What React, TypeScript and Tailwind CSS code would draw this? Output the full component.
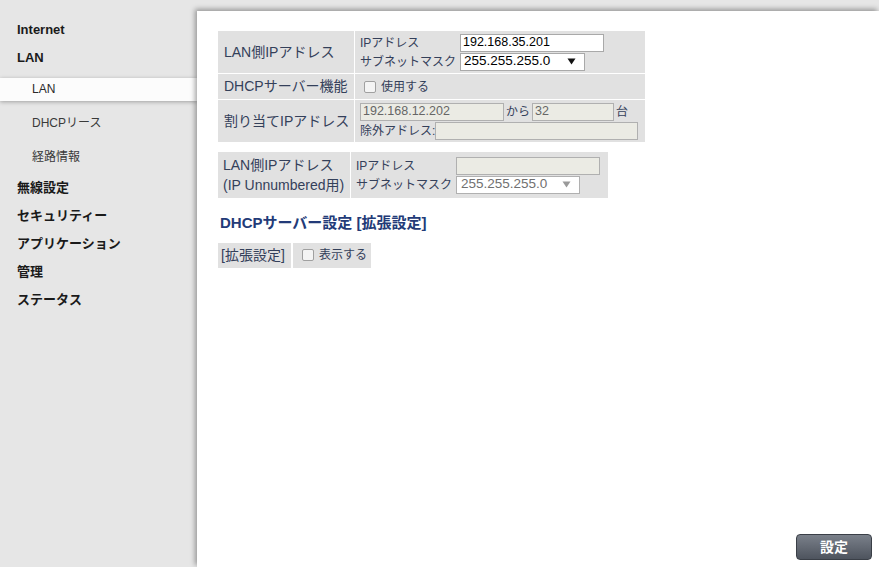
import React from "react";

const font = { fontFamily: '"Liberation Sans", Arial, "Noto Sans CJK JP", sans-serif' };

function Checkbox() {
  return (
    <span className="inline-block w-[12px] h-[12px] border border-[#a0a0a0] rounded-[2px] bg-[#f4f4f4] mr-[5px] shrink-0" />
  );
}

function Arrow({ light }: { light?: boolean }) {
  return (
    <svg width="9" height="7" viewBox="0 0 9 7" className="shrink-0">
      <path d="M0.5 0.5 L8.5 0.5 L4.5 6.5 Z" fill={light ? "#9a9a9a" : "#111"} />
    </svg>
  );
}

export default function App() {
  return (
    <div className="w-[879px] h-[567px] bg-[#e6e6e6] flex overflow-hidden relative" style={font}>
      {/* Sidebar */}
      <div className="w-[197px] shrink-0 pt-[16px] text-[13px] text-[#1a1a1a] whitespace-nowrap">
        <div className="h-[28px] flex items-center pl-[17px] font-bold">Internet</div>
        <div className="h-[28px] flex items-center pl-[17px] font-bold">LAN</div>
        <div className="h-[34px] flex items-center">
          <div className="w-full h-[23px] bg-[#fcfcfc] flex items-center pl-[32px] text-[12px] text-[#2a2a2a] shadow-[0_1px_4px_rgba(0,0,0,0.3)]">
            LAN
          </div>
        </div>
        <div className="h-[34px] flex items-center pl-[32px] text-[12px] text-[#3a3a3a]">DHCPリース</div>
        <div className="h-[34px] flex items-center pl-[32px] text-[12px] text-[#3a3a3a]">経路情報</div>
        <div className="h-[28px] flex items-center pl-[17px] font-bold">無線設定</div>
        <div className="h-[28px] flex items-center pl-[17px] font-bold">セキュリティー</div>
        <div className="h-[28px] flex items-center pl-[17px] font-bold">アプリケーション</div>
        <div className="h-[28px] flex items-center pl-[17px] font-bold">管理</div>
        <div className="h-[28px] flex items-center pl-[17px] font-bold">ステータス</div>
      </div>

      {/* Main */}
      <div className="flex-1 flex flex-col pt-[11px]">
        <div className="flex-1 bg-white shadow-[-2px_-2px_5px_rgba(0,0,0,0.35)] pl-[21px] pt-[20px] pr-[7px] pb-[7px] flex flex-col text-[#34405a] whitespace-nowrap">
          {/* Table 1 */}
          <div className="w-[427px] grid grid-cols-[136px_1fr] gap-x-[1px] gap-y-[1px] bg-white">
            <div className="bg-[#e1e1e1] h-[42px] flex items-center pl-[6px] text-[14px]">LAN側IPアドレス</div>
            <div className="bg-[#e1e1e1] h-[42px] pl-[5px] flex flex-col justify-center text-[12px]">
              <div className="flex items-center h-[19px]">
                <span className="w-[100px]">IPアドレス</span>
                <div className="w-[144px] h-[18px] border border-[#a9a9a9] bg-white text-[12.5px] text-black flex items-center pl-[2px]">192.168.35.201</div>
              </div>
              <div className="flex items-center h-[19px]">
                <span className="w-[100px]">サブネットマスク</span>
                <div className="w-[125px] h-[18px] border border-[#a9a9a9] bg-white text-[13.5px] text-black flex items-center pl-[3px] pr-[8px] justify-between">
                  <span>255.255.255.0</span>
                  <Arrow />
                </div>
              </div>
            </div>
            <div className="bg-[#e1e1e1] h-[25px] flex items-center pl-[6px] text-[14px]">DHCPサーバー機能</div>
            <div className="bg-[#e1e1e1] h-[25px] flex items-center pl-[9px] text-[12px]">
              <Checkbox />
              使用する
            </div>
            <div className="bg-[#e1e1e1] h-[42px] flex items-center pl-[6px] text-[14px]">割り当てIPアドレス</div>
            <div className="bg-[#e1e1e1] h-[42px] pl-[5px] flex flex-col justify-center text-[12px]">
              <div className="flex items-center h-[19px]">
                <div className="w-[144px] h-[18px] border border-[#b0b0b0] bg-[#ebebe4] text-[12.5px] text-[#666] flex items-center pl-[2px]">192.168.12.202</div>
                <span className="px-[2px]">から</span>
                <div className="w-[82px] h-[18px] border border-[#b0b0b0] bg-[#ebebe4] text-[12.5px] text-[#666] flex items-center pl-[2px]">32</div>
                <span className="pl-[2px]">台</span>
              </div>
              <div className="flex items-center h-[19px]">
                <span>除外アドレス:</span>
                <div className="w-[203px] h-[18px] border border-[#b0b0b0] bg-[#ebebe4]" />
              </div>
            </div>
          </div>

          {/* Table 2 */}
          <div className="mt-[10px] w-[390px] grid grid-cols-[132px_1fr] gap-x-[1px] bg-white">
            <div className="bg-[#e1e1e1] h-[46px] flex flex-col justify-center pl-[5px] text-[14px] leading-[20px]">
              <span>LAN側IPアドレス</span>
              <span>(IP Unnumbered用)</span>
            </div>
            <div className="bg-[#e1e1e1] h-[46px] pl-[5px] flex flex-col justify-center text-[12px]">
              <div className="flex items-center h-[19px]">
                <span className="w-[100px]">IPアドレス</span>
                <div className="w-[144px] h-[18px] border border-[#b0b0b0] bg-[#ebebe4]" />
              </div>
              <div className="flex items-center h-[19px]">
                <span className="w-[100px]">サブネットマスク</span>
                <div className="w-[124px] h-[18px] border border-[#b0b0b0] bg-white text-[13.5px] text-[#707070] flex items-center pl-[4px] pr-[8px] justify-between">
                  <span>255.255.255.0</span>
                  <Arrow light />
                </div>
              </div>
            </div>
          </div>

          {/* Heading */}
          <div className="mt-[14px] pl-[2px] text-[15px] font-bold text-[#233b78]">DHCPサーバー設定 [拡張設定]</div>

          {/* Table 3 */}
          <div className="mt-[8px] flex gap-x-[2px]">
            <div className="bg-[#e1e1e1] h-[25px] w-[73px] flex items-center pl-[3px] text-[14px]">[拡張設定]</div>
            <div className="bg-[#e1e1e1] h-[25px] w-[78px] flex items-center pl-[9px] text-[12px]">
              <Checkbox />
              表示する
            </div>
          </div>

          <div className="flex-1" />
          <div className="flex justify-end">
            <button className="w-[76px] h-[26px] rounded-[4px] border border-[#3a3f47] bg-gradient-to-b from-[#7a808a] to-[#4e545e] text-white font-bold text-[14px] flex items-center justify-center">
              設定
            </button>
          </div>
        </div>
      </div>
    </div>
  );
}
